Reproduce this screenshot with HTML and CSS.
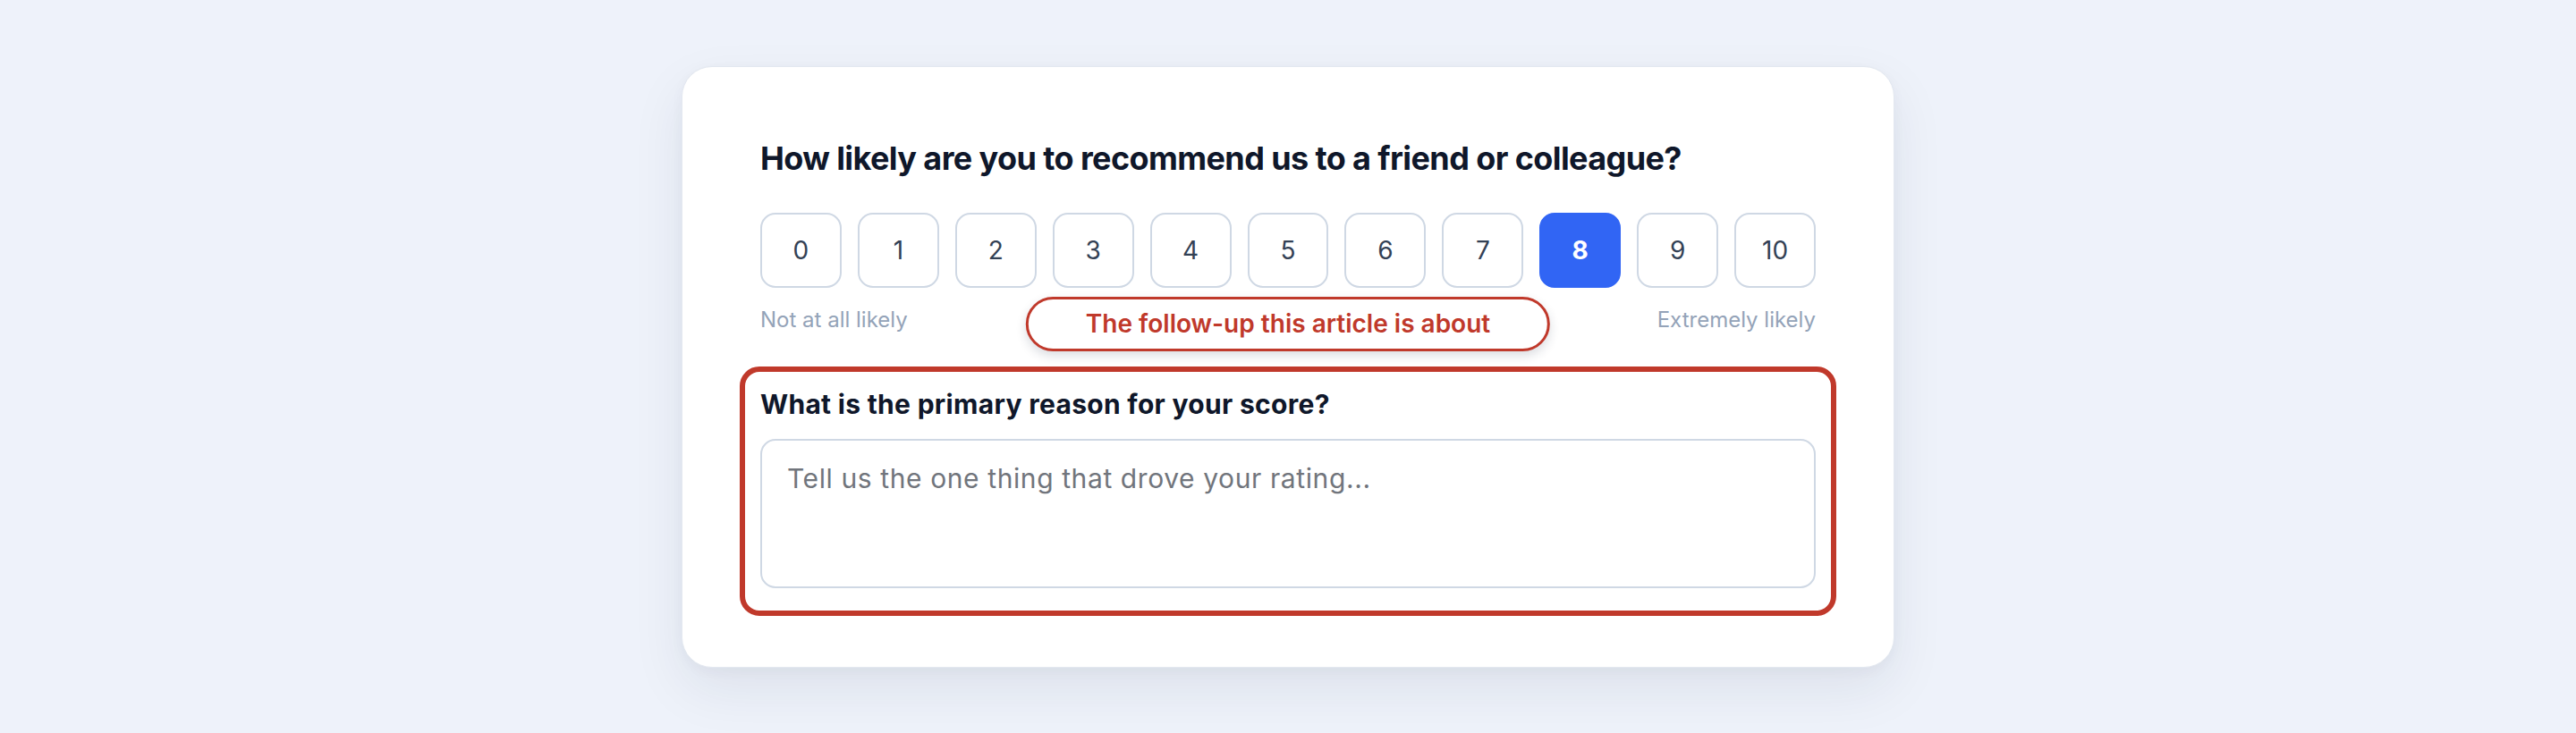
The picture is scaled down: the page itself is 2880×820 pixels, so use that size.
FILE: index.html
```html
<!DOCTYPE html>
<html lang="en">
<head>
<meta charset="utf-8">
<title>NPS survey</title>
<link rel="stylesheet" href="styles.css">
</head>
<body>
  <main class="card">
    <h1 class="question">How likely are you to recommend us to a friend or colleague?</h1>
    <div class="scale">
      <button class="score">0</button>
      <button class="score">1</button>
      <button class="score">2</button>
      <button class="score">3</button>
      <button class="score">4</button>
      <button class="score">5</button>
      <button class="score">6</button>
      <button class="score">7</button>
      <button class="score score--active">8</button>
      <button class="score">9</button>
      <button class="score">10</button>
    </div>
    <div class="scale-labels">
      <span>Not at all likely</span>
      <span class="callout">The follow-up this article is about</span>
      <span>Extremely likely</span>
    </div>
    <section class="followup">
      <label class="followup-label" for="reason">What is the primary reason for your score?</label>
      <textarea id="reason" class="followup-input" placeholder="Tell us the one thing that drove your rating..."></textarea>
    </section>
  </main>
</body>
</html>
```

FILE: styles.css
```css
* {
  box-sizing: border-box;
}

html,
body {
  height: 100%;
}

body {
  margin: 0;
  background: #eef2fa;
  font-family: Inter, "Noto Sans", "Liberation Sans", sans-serif;
  display: flex;
  align-items: center;
  justify-content: center;
}

.card {
  width: 1356px;
  background: #ffffff;
  border: 1px solid #e3e8f0;
  border-radius: 34px;
  padding: 78px 87px 57px;
  box-shadow: 0 24px 60px rgba(30, 41, 70, 0.08), 0 4px 14px rgba(30, 41, 70, 0.04);
}

.question {
  margin: 0;
  font-size: 36px;
  line-height: 48px;
  font-weight: 700;
  color: #0f172a;
  letter-spacing: -0.6px;
}

.scale {
  margin-top: 37px;
  display: grid;
  grid-template-columns: repeat(11, 1fr);
  gap: 18px;
}

.score {
  height: 84px;
  border: 2px solid #cfd8e4;
  border-radius: 17px;
  background: #ffffff;
  font-family: inherit;
  font-size: 28px;
  font-weight: 400;
  color: #334155;
  padding: 0;
}

.score--active {
  background: #3165f4;
  border-color: #3165f4;
  color: #ffffff;
  font-weight: 700;
}

.scale-labels {
  position: relative;
  margin-top: 21px;
  display: flex;
  justify-content: space-between;
  font-size: 24px;
  line-height: 29px;
  color: #94a3b8;
}

/* annotation pill floating over the label row */
.callout {
  position: absolute;
  top: -11px;
  left: 50%;
  transform: translateX(-50%);
  padding: 10px 64px;
  border: 3px solid #c0392b;
  border-radius: 999px;
  background: #ffffff;
  color: #c0392b;
  font-size: 28px;
  line-height: 35px;
  font-weight: 600;
  white-space: nowrap;
  box-shadow: 0 5px 12px rgba(30, 41, 70, 0.16);
}

.followup {
  margin: 38px -23px 0;
  border: 6px solid #c0392b;
  border-radius: 22px;
  padding: 18px 17px 25px;
  display: flex;
  flex-direction: column;
}

.followup-label {
  font-size: 30px;
  line-height: 36px;
  font-weight: 700;
  letter-spacing: 0.3px;
  color: #0f172a;
}

.followup-input {
  margin-top: 21px;
  height: 167px;
  border: 2px solid #cfd8e4;
  border-radius: 17px;
  padding: 21px 28px;
  font-family: inherit;
  font-size: 30px;
  line-height: 42px;
  letter-spacing: 0.6px;
  color: #0f172a;
  resize: none;
  outline: none;
}

.followup-input::placeholder {
  color: #71757c;
}
```
